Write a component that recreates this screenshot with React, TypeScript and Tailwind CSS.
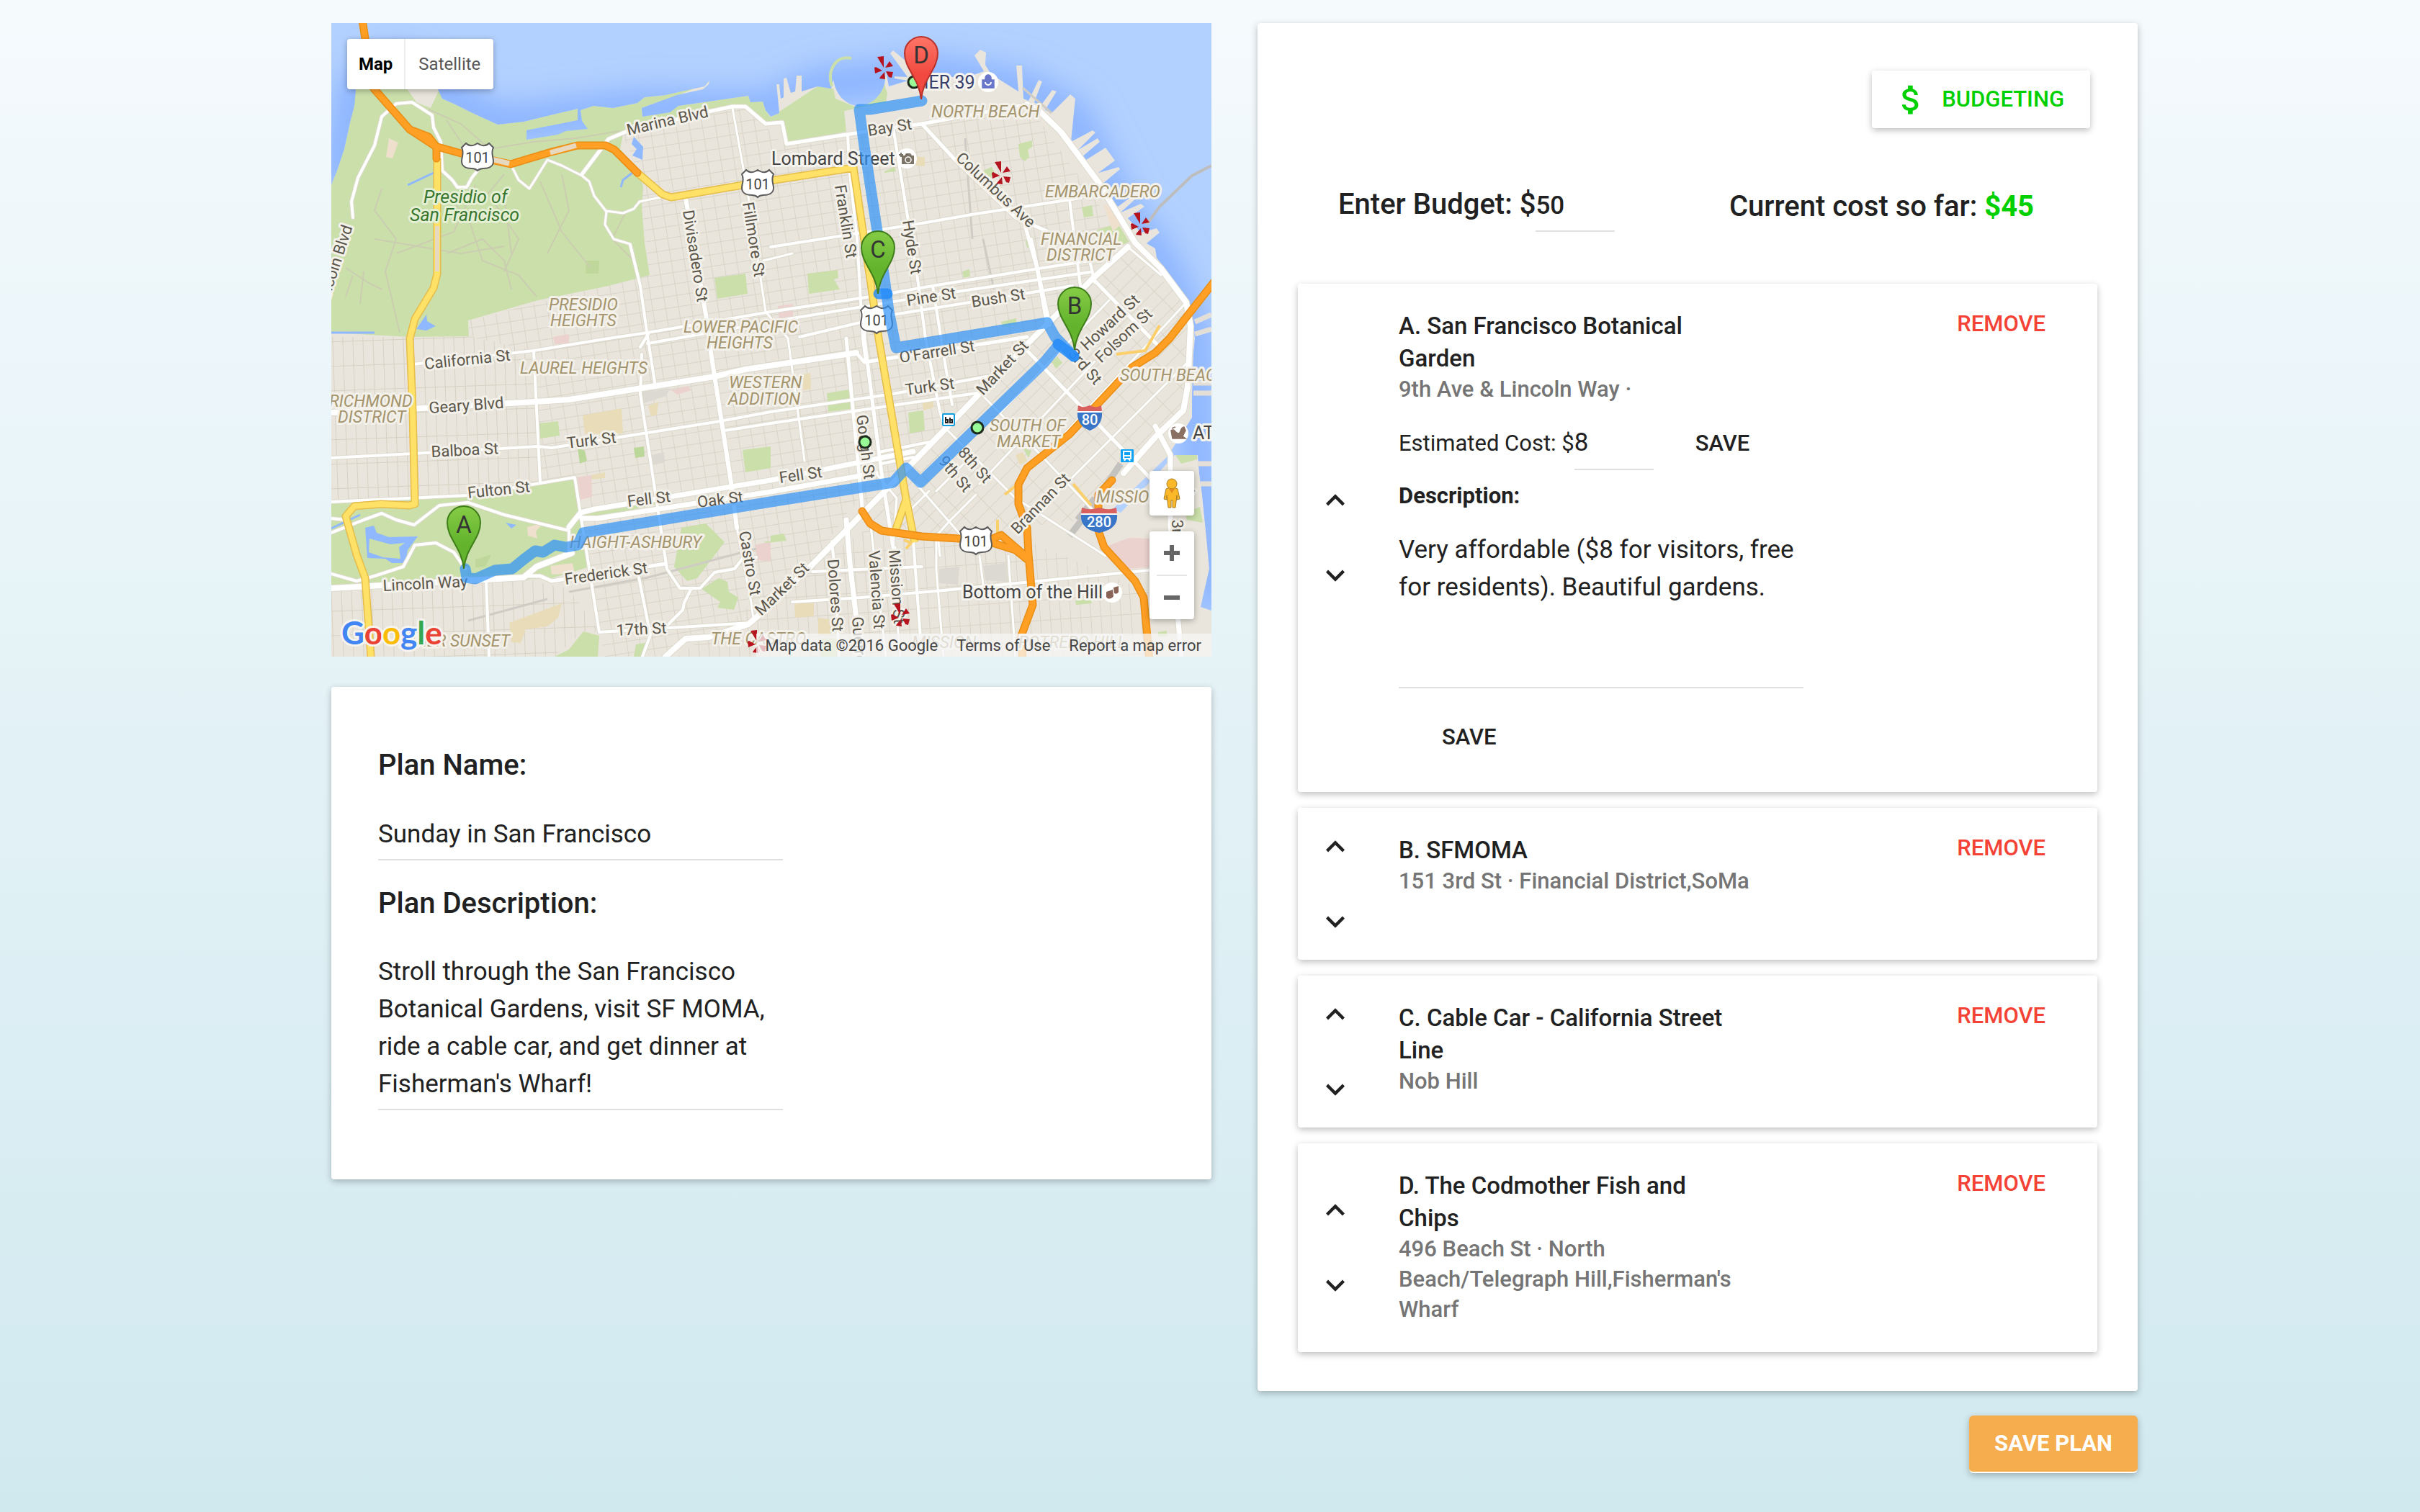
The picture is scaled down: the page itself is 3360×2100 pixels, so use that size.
import React from "react";
import { MdAttachMoney, MdExpandLess, MdExpandMore } from "react-icons/md";

/* ---------- Map drawing data ---------- */

const WATER =
  "M0 0H1222V816L1207 811L1219 758L1215 715L1209 655L1205 625L1203 600L1171 600L1136 638L1096 680L1085 675L1162 601L1168 591L1195 548V521L1197 458L1199 438L1195 405L1187 385L1177 368L1158 341L1146 326L1144 313L1132 306L1150 291L1146 285L1124 291L1106 271L1129 255L1124 251L1096 263L1118 243L1114 239L1092 255L1069 225L1095 203L1093 200L1065 208L1088 191L1075 173L1043 193L1041 187L1067 165L1064 160L1037 176L1061 152L1057 149L1027 165L1033 105L1026 99L1001 124L991 121L1007 95L1001 93L984 116L976 110L987 81L982 79L968 108L961 105L959 59H951L954 95L916 71L908 58L909 41L901 37L893 45L906 67L883 75L863 75L833 70L808 61L780 38L776 42L800 75L782 74V77L800 80L774 88L770 66L768 85C760 110 740 116 729 115C712 112 700 98 697 78L694 91L675 88L653 95V73H646L644 95L638 97L632 76L628 77V103L624 105L622 85H618L622 125L610 130L603 121L599 109L582 110L579 101L482 115L470 124L432 130L431 118L480 100L516 92L524 85L525 80L518 88L490 94L464 100L435 103L425 111L391 118L364 115L346 121L348 136L356 147L326 150L314 155L271 162V149L342 135V119L267 137L231 141L196 125L172 113L154 105L148 92L80 70L40 62L34 92L32 115L26 138L18 175L8 205L0 225Z";

const PARKS = [
  "M0 225L8 205L18 175L26 138L34 92L40 62L90 70L118 110L138 118L150 92L154 105L172 113L196 125L231 141L267 137L342 119L346 121L364 115L391 118L425 111L435 103L464 100L524 82L480 101L431 118L432 132L405 155L401 175L427 205L433 228L431 255L435 305L442 350L385 365L287 385L190 413L191 435L109 436L0 430Z",
  "M432 130L482 115L579 101L582 110L599 109L603 121L610 131L675 88L697 91L700 105L729 117L768 85L772 98L770 110L712 122L715 151L634 165L626 138L603 140L575 114L524 122L410 150Z",
  "M0 666L188 656L338 631L348 676L366 676L449 658L452 668L366 688L350 690L356 756L306 771L211 775L0 784Z",
  "M486 701L520 695L546 721L508 771L494 775L476 755Z",
  "M538 771L550 776L552 790L565 798L559 815L536 812L540 804L514 786Z",
  "M350 845L372 851L370 880H310L330 870Z",
  "M423 863L440 860L432 880H420Z",
  "M532 354L575 348L578 376L536 383Z",
  "M661 348L703 343L704 354L698 356L706 370L663 376Z",
  "M571 593L610 588V618L575 624Z",
  "M688 514L725 508L728 535L690 540Z",
  "M801 541L822 538L824 566L803 570Z",
  "M289 556L315 553L317 573L290 577Z",
  "M954 168L973 163V172L967 176L969 186L963 192L956 186Z",
  "M905 205L917 200L922 210L912 216Z",
  "M1042 256L1056 253L1058 268L1045 270Z",
  "M1062 288L1092 278L1108 304L1098 308Z",
  "M964 302L972 300L974 312L966 312Z",
  "M876 345L886 342L887 352L878 354Z",
  "M930 415L951 410V418L932 421Z",
  "M768 206L782 200L784 206L768 208Z",
  "M1163 352L1177 368L1175 372Z",
  "M600 720H610V712L628 709L632 719L604 722Z",
  "M1172 600H1202V606L1180 612Z",
  "M1185 680L1206 672L1210 694L1188 690Z",
  "M1033 802L1054 800L1056 806L1034 808Z",
  "M1148 846L1160 844V852H1148Z",
  "M680 855H702V880H680Z",
  "M960 590L972 594L968 604Z",
  "M1000 470L1008 463L1015 472L1006 480Z",
];

const TAN = [
  "M349 545L403 535L405 570L352 571Z",
  "M440 532L454 526L452 544L444 546Z",
  "M571 210L592 208L596 238L574 240Z",
  "M721 186H733L732 199H722Z",
  "M813 186L824 186V199L812 198Z",
  "M247 833L320 806L315 826L300 838L270 842L263 861L250 860Z",
  "M643 804L670 800V824L644 826Z",
  "M676 826L698 829L694 852L676 850Z",
  "M655 488L665 486L666 508L655 510Z",
  "M820 526L836 524V534L822 538Z",
  "M360 628L380 624V632L362 634Z",
  "M950 600L960 596L966 608L956 614Z",
];

const PINK = [
  "M341 631L361 628L362 658L346 662Z",
  "M620 393L641 390V412L622 416Z",
  "M1073 728L1108 715L1136 716V756L1104 758L1085 742Z",
  "M472 510L495 504L500 510L480 516Z",
  "M588 725L610 720V748L592 746Z",
  "M308 436L330 432V445L310 446Z",
];

const SAND = [
  "M80 160L93 166L85 188L76 186Z",
  "M272 700L295 694L284 706L286 716L273 712Z",
  "M304 754L335 750L338 764L306 766Z",
  "M1072 250L1085 290L1096 280L1086 262Z",
];

const GREY = ["M844 758L872 755L870 780L844 778Z", "M905 754L936 750L938 776L908 774Z", "M432 512L470 507L465 518L434 528Z", "M445 600L462 596L463 610L446 614Z"];

const LAKES = [
  "M47 701L59 698L63 708L80 714L120 713L106 732L103 750L84 750L75 744L50 743ZM53 716L52 735L72 742L96 744L94 728L102 722L82 724Z",
  "M242 694L257 697L250 702Z",
  "M420 158L433 172L432 190L418 184L424 175L417 168Z",
  "M132 405L133 414L145 421L132 427L118 425Z",
];

const GRIDS: { d: string; fill: string }[] = [
  { d: "M0 436H109L191 435L281 455L290 640L188 656L0 666Z", fill: "url(#gridWest)" },
  { d: "M0 790L267 772L330 786L372 846L350 845L310 880H0Z", fill: "url(#gridWest)" },
  { d: "M191 413L442 350L431 255L433 228L405 155L575 116L630 170L968 114L1100 300L974 440L800 620L737 672L600 650L348 688L338 631L290 640L281 455L191 436Z", fill: "url(#gridNorth)" },
  { d: "M350 690L610 655L730 660L669 751L579 835L524 853L492 855L464 880H380L372 846Z", fill: "url(#gridNorth)" },
  { d: "M1106 315L1187 388L1193 421L1185 538L1144 575L1050 690L960 700L860 716L748 690L800 620L974 440Z", fill: "url(#gridSoma)" },
  { d: "M669 751L748 700L860 722L968 720L1136 790V880H480Z", fill: "url(#gridMission)" },
];

const ROADS: { w: number; d: string }[] = [
  { w: 4, d: "M113 474L281 455L385 438L439 430L610 401L748 380L835 365L982 341L1053 330" },
  { w: 4, d: "M439 445L610 415L835 378L1053 346M650 436L780 405L1029 365" },
  { w: 8, d: "M0 541L109 536L283 526L330 523L425 508L532 491L575 481L729 458" },
  { w: 5, d: "M729 458L740 471L966 436M715 438L737 671M740 400V438L764 625L780 728" },
  { w: 4, d: "M0 604L113 598L287 588L306 590L433 570L540 553L610 540L780 515L910 491" },
  { w: 4, d: "M546 566L610 556L780 531L903 513M760 596L830 582M764 612L808 603" },
  { w: 4, d: "M0 665L188 656L338 631L372 846L583 833" },
  { w: 7, d: "M330 700L346 680L366 675L610 635L808 595M348 688L370 688L610 651L756 625" },
  { w: 8, d: "M0 785L267 770L285 755L334 736" },
  { w: 5, d: "M267 768L290 768L306 775L464 751" },
  { w: 4, d: "M281 455L290 638M215 775L219 880" },
  { w: 6, d: "M492 243L520 405L526 451L555 638L563 701" },
  { w: 3, d: "M563 701L583 805L586 828M557 118L579 241L603 401L634 438L657 608M600 330L640 320" },
  { w: 4, d: "M415 308L429 365L439 435L450 505M429 450L440 432M431 460L429 515L466 758L484 785H512L532 763L560 758L570 745L590 742M500 785L490 805L488 815L465 838M425 760L443 850L432 880" },
  { w: 5, d: "M348 210L385 161L409 151L524 123L557 116H575L603 140L626 138L632 168L740 151L820 140L966 113" },
  { w: 4, d: "M30 270L28 248L37 215L60 170L70 130L90 112L112 110L140 128L142 145L152 165L154 205L168 218L175 228L188 228L195 215L203 205" },
  { w: 3, d: "M249 196L260 218L275 230L300 190L320 198L348 212L358 220L365 240L382 262L380 280L392 300L415 307M382 261L405 264L420 258L428 248L462 241" },
  { w: 4, d: "M717 155L719 200L730 300L738 438L742 470" },
  { w: 4, d: "M780 145L814 355L825 438L845 540L852 560M835 365L850 460L862 530M910 491L920 505" },
  { w: 5, d: "M820 140L866 190L950 270L998 291M960 270L980 341L994 420" },
  { w: 4, d: "M610 311L820 278L895 265L1041 243M1025 246L1040 365M972 300L998 420M1053 330L1060 360" },
  { w: 8, d: "M966 113L982 121L1013 151L1065 221L1116 305L1152 341L1187 388L1193 421L1189 505L1183 538L1144 575L1100 625" },
  { w: 8, d: "M1106 311L1057 355L974 438L800 618L669 751L610 808L579 835L524 853L492 855L464 880" },
  { w: 5, d: "M966 455L1136 631L1168 640M1057 355L1150 450" },
  { w: 3, d: "M905 518L985 600L1070 690M850 560L950 660L1075 740M1106 311L1152 350M812 640L895 735" },
  { w: 3, d: "M1060 470L900 640M1187 388L1000 590M1190 470L1130 530L960 700M1080 385L930 540M840 650L890 600M756 625L785 660L780 728M800 680L830 650M845 740L842 710L860 690L895 655" },
  { w: 7, d: "M1144 560L1165 600V700L1180 880M715 690L720 750L735 880" },
  { w: 4, d: "M640 804L735 798L850 788L1136 760M668 762L820 755M808 720L820 880M695 720L700 770L705 880" },
  { w: 3, d: "M840 716V760L850 880M900 740L905 780M940 740L950 880M748 690L770 880M783 728V800L790 880" },
  { w: 4, d: "M0 688L20 690M0 708L45 690L70 681L90 690L115 697L150 670L190 666L240 683L330 705L330 740M0 765L35 775L60 768L100 755L116 725L145 722L170 735L186 758" },
];

const MINOR =
  "M70 230L60 260L90 300L75 345L95 430M150 230L190 270L210 330L260 350L285 380M220 240L260 300L240 345M290 220L320 290L360 340M200 225L170 290L90 320M60 300L180 320L240 310M160 320L210 300L240 330L250 370M160 135L190 180M410 260L390 300L420 330M240 210L215 240M320 210L330 260L300 320M240 240L250 320M135 120L180 140L220 175L280 165L340 160L400 150M20 340L50 360L70 370M30 350L20 380M45 345L40 390";

type Label = { t: string; x: number; y: number; r?: number };

const STREETS: Label[] = [
  { t: "Marina Blvd", x: 412, y: 156, r: -13 },
  { t: "Divisadero St", x: 488, y: 261, r: 81 },
  { t: "Fillmore St", x: 571, y: 250, r: 81 },
  { t: "Lincoln Blvd", x: -7, y: 396, r: -72 },
  { t: "Franklin St", x: 699, y: 226, r: 81 },
  { t: "Hyde St", x: 793, y: 275, r: 81 },
  { t: "Columbus Ave", x: 866, y: 189, r: 43 },
  { t: "Bay St", x: 746, y: 157, r: -9 },
  { t: "Pine St", x: 800, y: 393, r: -9 },
  { t: "Bush St", x: 890, y: 395, r: -9 },
  { t: "Howard St", x: 1049, y: 456, r: -43 },
  { t: "Folsom St", x: 1069, y: 473, r: -43 },
  { t: "3rd St", x: 1022, y: 460, r: 49 },
  { t: "Market St", x: 905, y: 518, r: -47 },
  { t: "Market St", x: 597, y: 824, r: -44 },
  { t: "O'Farrell St", x: 790, y: 472, r: -9 },
  { t: "Turk St", x: 798, y: 517, r: -8 },
  { t: "Gough St", x: 729, y: 545, r: 83 },
  { t: "8th St", x: 869, y: 597, r: 49 },
  { t: "9th St", x: 842, y: 609, r: 50 },
  { t: "Fell St", x: 623, y: 639, r: -8 },
  { t: "Brannan St", x: 953, y: 711, r: -46 },
  { t: "Dolores St", x: 689, y: 745, r: 86 },
  { t: "Valencia St", x: 746, y: 733, r: 86 },
  { t: "Mission St", x: 774, y: 732, r: 86 },
  { t: "Guerrero St", x: 723, y: 825, r: 86 },
  { t: "3rd St", x: 1167, y: 690, r: 88 },
  { t: "California St", x: 130, y: 481, r: -6 },
  { t: "Geary Blvd", x: 136, y: 542, r: -4 },
  { t: "Balboa St", x: 139, y: 603, r: -3 },
  { t: "Turk St", x: 328, y: 591, r: -7 },
  { t: "Fulton St", x: 190, y: 660, r: -6 },
  { t: "Fell St", x: 412, y: 672, r: -7 },
  { t: "Oak St", x: 509, y: 673, r: -7 },
  { t: "Lincoln Way", x: 72, y: 789, r: -3 },
  { t: "Frederick St", x: 325, y: 780, r: -8 },
  { t: "17th St", x: 396, y: 851, r: -3 },
  { t: "Castro St", x: 566, y: 707, r: 80 },
];

const AREAS: Label[] = [
  { t: "PRESIDIO", x: 302, y: 399 },
  { t: "HEIGHTS", x: 304, y: 421 },
  { t: "LOWER PACIFIC", x: 489, y: 430 },
  { t: "HEIGHTS", x: 521, y: 452 },
  { t: "LAUREL HEIGHTS", x: 262, y: 487 },
  { t: "RICHMOND", x: -3, y: 533 },
  { t: "DISTRICT", x: 9, y: 555 },
  { t: "WESTERN", x: 552, y: 507 },
  { t: "ADDITION", x: 551, y: 530 },
  { t: "HAIGHT-ASHBURY", x: 331, y: 729 },
  { t: "INNER SUNSET", x: 95, y: 866 },
  { t: "THE CASTRO", x: 527, y: 863 },
  { t: "NORTH BEACH", x: 833, y: 131 },
  { t: "EMBARCADERO", x: 991, y: 242 },
  { t: "FINANCIAL", x: 985, y: 308 },
  { t: "DISTRICT", x: 993, y: 330 },
  { t: "SOUTH BEACH", x: 1095, y: 497 },
  { t: "SOUTH OF", x: 914, y: 567 },
  { t: "MARKET", x: 924, y: 589 },
  { t: "MISSION BAY", x: 1062, y: 666 },
  { t: "MISSION", x: 806, y: 868 },
  { t: "POTRERO HILL", x: 954, y: 868 },
];

const PINS = [
  { l: "A", x: 184, y: 758 },
  { l: "C", x: 759, y: 376 },
  { l: "B", x: 1032, y: 454 },
  { l: "D", x: 819, y: 106 },
];

const ROUTE =
  "M820 108L748 120H733L740 171L768 355L774 400L784 451L994 416L1005 436L1031 463M1009 448L990 471L818 638L798 618L780 638L610 665L350 708L342 725L326 728L310 725L294 735L283 733L267 745L251 758L227 760L200 772L188 770L186 758";

function Shield101({ x, y }: { x: number; y: number }) {
  return (
    <g transform={`translate(${x} ${y})`}>
      <path
        d="M-16 -19C-12 -15 -6 -15 0 -19C6 -15 12 -15 16 -19L22 -13C18 -6 22 0 22 6C22 14 14 16 8 16C4 16 2 17 0 19C-2 17 -4 16 -8 16C-14 16 -22 14 -22 6C-22 0 -18 -6 -22 -13Z"
        fill="#fff"
        stroke="#5c5c5c"
        strokeWidth="2"
      />
      <text y="8" textAnchor="middle" fontSize="20" fill="#444">101</text>
    </g>
  );
}

function Interstate({ x, y, w, n }: { x: number; y: number; w: number; n: string }) {
  return (
    <g transform={`translate(${x} ${y})`}>
      <path d={`M${-w} -8H${w}C${w + 1} 6 ${w - 6} 14 0 18C${6 - w} 14 ${-w - 1} 6 ${-w} -8Z`} fill="#3a76c8" />
      <path d={`M${-w} -8L${1 - w} -17C${-w / 2} -13 ${-w / 3} -15 0 -17C${w / 3} -15 ${w / 2} -13 ${w - 1} -17L${w} -8Z`} fill="#d9605f" />
      <path d={`M${-w} -8H${w}`} stroke="#fff" strokeWidth="2" />
      <text y="10" textAnchor="middle" fontSize="20" fontWeight="500" fill="#fff">{n}</text>
    </g>
  );
}

function Burst({ x, y }: { x: number; y: number }) {
  return (
    <g transform={`translate(${x} ${y})`} fill="#b5141f">
      <path d="M-9 -17L0 -18V-2Z" />
      <path d="M2 -2L8 -11L13 -4Z" />
      <path d="M3 3L13 4L11 12L7 11Z" />
      <path d="M1 4L2 14L-6 13L-5 11Z" />
      <path d="M-2 2L-12 6L-13 -2L-11 -3Z" />
    </g>
  );
}

function Pin({ l, x, y }: { l: string; x: number; y: number }) {
  const end = l === "D";
  return (
    <g transform={`translate(${x} ${y})`}>
      <path
        d="M0 0C-3 -30 -23 -42 -23 -64A23 23 0 0 1 23 -64C23 -42 3 -30 0 0Z"
        fill={end ? "url(#pinEnd)" : "url(#pinStop)"}
        stroke={end ? "#b8322c" : "#3f7d1a"}
        strokeWidth="2"
      />
      <text y="-50" textAnchor="middle" fontSize="33" fill="#333">{l}</text>
    </g>
  );
}

function MapDrawing() {
  return (
    <svg viewBox="0 0 1222 880" preserveAspectRatio="xMidYMid slice" className="block h-full w-full font-['Roboto',sans-serif]" role="img" aria-label="Route map of San Francisco">
      <defs>
        <pattern id="gridWest" width="14" height="34" patternUnits="userSpaceOnUse" patternTransform="rotate(-2)">
          <path d="M0 0V34M0 0H14" stroke="#d6d1c2" strokeWidth="2" fill="none" />
        </pattern>
        <pattern id="gridNorth" width="18" height="16" patternUnits="userSpaceOnUse" patternTransform="rotate(-9)">
          <path d="M0 0V16M0 0H18" stroke="#d9d4c7" strokeWidth="2" fill="none" />
        </pattern>
        <pattern id="gridSoma" width="34" height="17" patternUnits="userSpaceOnUse" patternTransform="rotate(-45)">
          <path d="M0 0V17M0 0H34" stroke="#d9d4c7" strokeWidth="2" fill="none" />
        </pattern>
        <pattern id="gridMission" width="14" height="28" patternUnits="userSpaceOnUse" patternTransform="rotate(-4)">
          <path d="M0 0V28M0 0H14" stroke="#d9d4c7" strokeWidth="2" fill="none" />
        </pattern>
        <linearGradient id="pinStop" x1="0" y1="0" x2="0" y2="1">
          <stop offset="0" stopColor="#86cc46" />
          <stop offset="0.6" stopColor="#63b32d" />
        </linearGradient>
        <linearGradient id="pinEnd" x1="0" y1="0" x2="0" y2="1">
          <stop offset="0" stopColor="#fd7567" />
          <stop offset="0.6" stopColor="#f1493f" />
        </linearGradient>
        <clipPath id="waterClip">
          <path d={WATER} />
        </clipPath>
        <filter id="shore" x="-10%" y="-10%" width="120%" height="120%">
          <feGaussianBlur stdDeviation="22" />
        </filter>
      </defs>

      <rect width="1222" height="880" fill="#e9e5dc" />
      {GRIDS.map((g, i) => <path key={i} d={g.d} fill={g.fill} />)}
      {TAN.map((d, i) => <path key={i} d={d} fill="#e8dcb9" />)}
      {PINK.map((d, i) => <path key={i} d={d} fill="#ebd2cf" />)}
      {GREY.map((d, i) => <path key={i} d={d} fill="#dcd8d2" />)}
      {PARKS.map((d, i) => <path key={i} d={d} fill="#cadfaa" />)}
      {SAND.map((d, i) => <path key={i} d={d} fill="#eee0cc" />)}
      <path d="M354 330H372L371 348H353ZM200 745L222 738L214 755L200 756Z" fill="#bfd79a" />
      <path d="M342 590L352 594L355 608L345 612ZM420 590L434 588L435 602L422 604Z" fill="#bcd79a" />
      <path d={MINOR} fill="none" stroke="#cbcdb0" strokeWidth="2" />
      <path d={WATER} fill="#b3d1ff" />
      <g clipPath="url(#waterClip)">
        <path d="M0 225L18 175L34 92L90 60L231 141L430 118L603 121L675 88L833 70L960 90L1030 130L1092 255L1150 330L1199 438V560L1215 715L1222 816" fill="none" stroke="#84aeff" strokeWidth="44" filter="url(#shore)" />
      </g>
      {LAKES.map((d, i) => <path key={i} d={d} fill="#90b8ff" fillRule="evenodd" />)}
      <path d="M106 225L142 208M402 228L405 218L418 208M0 430H60M0 702L40 683" stroke="#90b8ff" strokeWidth="3" fill="none" />
      <path d="M1197 500H1222M1197 514H1222M1203 612H1222M1207 640H1222M1199 415L1222 405M1199 432L1222 425" stroke="#e3dfd6" strokeWidth="7" />
      <path d="M695 88C688 66 700 44 722 49" stroke="#cadfaa" strokeWidth="4" fill="none" />
      <path d="M1132 280L1150 255L1195 212L1222 198" stroke="#bdbdbd" strokeWidth="4" fill="none" />
      <path d="M1096 612L1050 680L1025 712M1060 660L1036 690" stroke="#c4c2bf" strokeWidth="9" fill="none" />
      <path d="M330 790L440 770L590 730M190 830L300 800" stroke="#cfccc5" strokeWidth="3" fill="none" />
      <path d="M880 160L890 300M905 300L920 370M960 90L1000 125" stroke="#cfccc5" strokeWidth="3" fill="none" />

      <g fill="none" strokeLinejoin="round" strokeLinecap="round">
        {ROADS.map((r, i) => <path key={i} d={r.d} stroke="#dedace" strokeWidth={r.w + 2} />)}
        {ROADS.map((r, i) => <path key={i} d={r.d} stroke="#fff" strokeWidth={r.w} />)}

        {/* Yellow arterials */}
        <g strokeLinecap="butt">
          <path d="M425 208L460 238L472 242L571 225L725 201L748 355L760 438L798 661L810 721M798 661L783 706M147 188V348L142 368L116 411L109 438L113 538L116 668L108 670L69 668L32 671L20 685L35 738L47 771L55 880" stroke="#e6bd4a" strokeWidth="11" />
          <path d="M425 208L460 238L472 242L571 225L725 201L748 355L760 438L798 661L810 721M798 661L783 706M147 188V348L142 368L116 411L109 438L113 538L116 668L108 670L69 668L32 671L20 685L35 738L47 771L55 880" stroke="#ffe168" strokeWidth="8" />
          <path d="M147 282V345" stroke="#e6d9c0" strokeWidth="6" />
          <path d="M1030 640L1055 670M925 690V715M935 655L960 635M795 718L805 722L798 730M1090 460L1130 455L1150 420M968 740L972 800" stroke="#fbcf6b" strokeWidth="4" />
        </g>

        {/* Orange freeways */}
        <path d="M43 -4L47 21L59 91L109 148L144 171L180 181L249 196L302 180L342 170H381L393 176L425 208M1226 359L1164 438L1144 458L1112 478L1053 541L1025 571L966 618L954 641V668L966 701L968 738L974 808L958 851L960 886M737 678L748 695L764 705L820 713L871 716L918 722L950 732L966 745M900 724L918 716L930 711L966 742M1084 635L1065 655V705L1073 728L1116 775L1128 798L1136 886M109 148L135 158L146 172V188" stroke="#ea8e14" strokeWidth="11" />
        <path d="M43 -4L47 21L59 91L109 148L144 171L180 181L249 196L302 180L342 170H381L393 176L425 208M1226 359L1164 438L1144 458L1112 478L1053 541L1025 571L966 618L954 641V668L966 701L968 738L974 808L958 851L960 886M737 678L748 695L764 705L820 713L871 716L918 722L950 732L966 745M900 724L918 716L930 711L966 742M1084 635L1065 655V705L1073 728L1116 775L1128 798L1136 886M109 148L135 158L146 172V188" stroke="#ff9f23" strokeWidth="8" />
        <path d="M222 189L247 195M304 180L340 170" stroke="#e6d9c0" strokeWidth="7" strokeLinecap="butt" />
      </g>

      <g fontSize="22" fill="#5b564b" stroke="#f3f1ea" strokeWidth="6" strokeLinejoin="round" paintOrder="stroke">
        {STREETS.map((s, i) => <text key={i} transform={`translate(${s.x} ${s.y}) rotate(${s.r ?? 0})`}>{s.t}</text>)}
      </g>
      <g fontSize="23" fontStyle="italic" fill="#a4946d" stroke="#f3f1ea" strokeWidth="6" strokeLinejoin="round" paintOrder="stroke">
        {AREAS.map((s, i) => <text key={i} x={s.x} y={s.y}>{s.t}</text>)}
      </g>
      <g fontSize="25" fontStyle="italic" fill="#38762f" stroke="#e4efd4" strokeWidth="6" strokeLinejoin="round" paintOrder="stroke">
        <text x="128" y="250">Presidio of</text>
        <text x="109" y="275">San Francisco</text>
      </g>
      <g fontSize="25" fill="#444" stroke="#f6f4ef" strokeWidth="6" strokeLinejoin="round" paintOrder="stroke">
        <text x="611" y="197">Lombard Street</text>
        <text x="876" y="799">Bottom of the Hill</text>
        <text x="1196" y="578">AT&amp;T Park</text>
        <text x="807" y="91" fill="#393f6b">PIER 39</text>
      </g>

      {/* Places of interest */}
      <g fill="#fff">
        <circle cx="912" cy="82" r="14" />
        <circle cx="799" cy="188" r="14" />
        <circle cx="1176" cy="570" r="14" />
        <circle cx="1084" cy="791" r="14" />
      </g>
      <path d="M904 79H920V90H904ZM908 79V76A4 4 0 0 1 916 76V79" fill="#6a76c9" stroke="#6a76c9" strokeWidth="1.5" />
      <path d="M908 82A4 4 0 0 0 916 82" fill="none" stroke="#fff" strokeWidth="2" />
      <path d="M792 184H796L798 181H804L806 184H809V196H792Z" fill="#7c7466" />
      <circle cx="801" cy="190" r="4" fill="#7c7466" stroke="#fff" strokeWidth="1.5" />
      <path d="M788 183H794M791 180V186" stroke="#7c7466" strokeWidth="2" />
      <path d="M1166 566C1170 562 1172 570 1176 570C1180 570 1178 562 1184 561L1186 566L1182 574L1186 577H1168ZM1167 563L1172 561" fill="#8a6f63" stroke="#8a6f63" strokeWidth="1.5" />
      <path d="M1076 790L1085 787L1086 796C1084 800 1078 801 1076 797ZM1086 784L1093 782V790C1092 793 1089 793 1087 792Z" fill="#8a6357" />
      <g transform="translate(857 551)">
        <rect x="-8" y="-8" width="16" height="16" rx="1" fill="#fff" stroke="#139ede" strokeWidth="2" />
        <path d="M-4 -4V4H-1V0H-4M2 -3V4H5V0H2" fill="none" stroke="#222" strokeWidth="2" />
      </g>
      <g transform="translate(1105 601)">
        <rect x="-9" y="-9" width="18" height="18" rx="1" fill="#10a3f5" />
        <path d="M-5 -6H5V4H-5ZM-4 7L-2 4M4 7L2 4" fill="none" stroke="#fff" strokeWidth="2" />
        <path d="M-5 0H5" stroke="#fff" strokeWidth="2" />
      </g>

      <Shield101 x={203} y={186} />
      <Shield101 x={592} y={223} />
      <Shield101 x={757} y={412} />
      <Shield101 x={895} y={719} />
      <Interstate x={1053} y={548} w={17} n="80" />
      <Interstate x={1066} y={690} w={25} n="280" />

      <path d={ROUTE} fill="none" stroke="#2e91f8" strokeOpacity="0.7" strokeWidth="15" strokeLinejoin="round" strokeLinecap="round" />
      <path d="M760 376H772M1009 446L1031 463" fill="none" stroke="#2189f8" strokeOpacity="0.8" strokeWidth="15" strokeLinecap="round" />

      <g fill="#98fb98" stroke="#1d2b1d" strokeWidth="3">
        <circle cx="809" cy="82" r="8" />
        <circle cx="897" cy="562" r="8" />
        <circle cx="741" cy="582" r="8" />
      </g>
      <Burst x={767} y={64} />
      <Burst x={930} y={210} />
      <Burst x={1123} y={281} />
      <Burst x={790} y={824} />
      <Burst x={591} y={861} />
      {PINS.map((p) => <Pin key={p.l} {...p} />)}

      <text x="14" y="863" fontSize="44" fontWeight="700" stroke="#f6f4ef" strokeWidth="6" strokeLinejoin="round" paintOrder="stroke" className="font-['Lato',sans-serif]">
        <tspan fill="#4285f4">G</tspan><tspan fill="#ea4335">o</tspan><tspan fill="#fbbc05">o</tspan><tspan fill="#4285f4">g</tspan><tspan fill="#34a853">l</tspan><tspan fill="#ea4335">e</tspan>
      </text>
    </svg>
  );
}

/* ---------- Page pieces ---------- */

const CARD = "rounded-[4px] bg-white shadow-[0_3px_10px_rgba(0,0,0,0.26)]";
const FIELD = "block border-b-2 border-[#e0e0e0] bg-transparent p-0 text-[35px] outline-none";
const AREA = `${FIELD} h-[218px] w-[562px] resize-none overflow-hidden leading-[52px]`;
const FLAT_BUTTON = "h-[76px] px-8 text-[31px] font-medium";

function MapPanel() {
  return (
    <section className="relative h-[880px] overflow-hidden">
      <MapDrawing />

      <div className="absolute top-[22px] left-[22px] flex h-[70px] rounded-[4px] bg-white shadow-[0_2px_8px_rgba(0,0,0,0.3)]">
        <button className="border-r-2 border-[#eee] px-4 text-[24px] font-bold text-black">Map</button>
        <button className="px-[18px] text-[24px] text-[#565656]">Satellite</button>
      </div>

      <div className="absolute right-6 bottom-[52px] flex w-[62px] flex-col gap-[22px]">
        <button aria-label="Street View" className="flex h-[62px] items-center justify-center rounded-[4px] bg-white shadow-[0_2px_8px_rgba(0,0,0,0.3)]">
          <svg viewBox="0 0 24 42" className="h-[42px] w-6">
            <path d="M4 15Q12 11 20 15L23 29L19 30V24L17 41H13V31H11V41H7L5 24V30L1 29Z" fill="#fbb929" stroke="#a87b22" strokeWidth="1" />
            <circle cx="12" cy="8" r="7" fill="#fbb929" stroke="#a87b22" strokeWidth="1" />
            <path d="M8 15H16L12 21Z" fill="#e58a1f" />
          </svg>
        </button>
        <div className="flex h-[122px] flex-col items-center rounded-[4px] bg-white shadow-[0_2px_8px_rgba(0,0,0,0.3)]">
          <button aria-label="Zoom in" className="flex w-full flex-1 items-center justify-center">
            <svg viewBox="0 0 24 24" className="size-6">
              <path d="M9 1H15V9H23V15H15V23H9V15H1V9H9Z" fill="#666" />
            </svg>
          </button>
          <span className="h-[2px] w-[42px] bg-[#e6e6e6]" />
          <button aria-label="Zoom out" className="flex w-full flex-1 items-center justify-center">
            <svg viewBox="0 0 24 24" className="size-6">
              <path d="M1 9H23V15H1Z" fill="#666" />
            </svg>
          </button>
        </div>
      </div>

      <div className="absolute right-0 bottom-0 flex h-8 items-center gap-[26px] bg-[#f5f5f5]/75 pr-[14px] pl-3 text-[22px] text-[#444]">
        <span>Map data ©2016 Google</span>
        <a href="#terms">Terms of Use</a>
        <a href="#report">Report a map error</a>
      </div>
    </section>
  );
}

function PlanForm() {
  return (
    <section className={`${CARD} px-[65px] pt-[79px] pb-24`}>
      <label htmlFor="plan-name" className="block text-[40px] leading-[60px] font-medium">Plan Name:</label>
      <input id="plan-name" defaultValue="Sunday in San Francisco" className={`${FIELD} mt-[31px] h-[71px] w-[562px]`} />
      <label htmlFor="plan-description" className="mt-[30px] block text-[40px] leading-[60px] font-medium">Plan Description:</label>
      <textarea
        id="plan-description"
        defaultValue="Stroll through the San Francisco Botanical Gardens, visit SF MOMA, ride a cable car, and get dinner at Fisherman's Wharf!"
        className={`${AREA} mt-[39px]`}
      />
    </section>
  );
}

type Stop = { id: string; name: string; place: string; cost?: string; note?: string };

const STOPS: Stop[] = [
  {
    id: "A",
    name: "San Francisco Botanical Garden",
    place: "9th Ave & Lincoln Way ·",
    cost: "8",
    note: "Very affordable ($8 for visitors, free for residents). Beautiful gardens.",
  },
  { id: "B", name: "SFMOMA", place: "151 3rd St · Financial District,SoMa" },
  { id: "C", name: "Cable Car - California Street Line", place: "Nob Hill" },
  { id: "D", name: "The Codmother Fish and Chips", place: "496 Beach St · North Beach/Telegraph Hill,Fisherman's Wharf" },
];

function StopCard({ stop }: { stop: Stop }) {
  return (
    <li className={`${CARD} flex min-h-[211px]`}>
      <div className="flex w-[140px] shrink-0 flex-col justify-center gap-[52px] pl-[26px]">
        <button aria-label={`Move ${stop.name} up`} className="size-[52px]">
          <MdExpandLess className="size-[52px]" />
        </button>
        <button aria-label={`Move ${stop.name} down`} className="size-[52px]">
          <MdExpandMore className="size-[52px]" />
        </button>
      </div>

      <div className="flex-1 pt-9 pb-[38px]">
        <h3 className="w-[484px] text-[33px] leading-[45px] font-medium">{`${stop.id}. ${stop.name}`}</h3>
        <p className="w-[500px] text-[31px] leading-[42px] font-medium text-[#757575]">{stop.place}</p>
        {stop.cost && (
          <div className="mt-[15px] flex h-[76px] items-baseline text-[31px]">
            <label htmlFor={`cost-${stop.id}`}>Estimated Cost: $</label>
            <input id={`cost-${stop.id}`} defaultValue={stop.cost} className={`${FIELD} h-[76px] w-[110px]`} />
            <button className={`${FLAT_BUTTON} ml-[26px]`}>SAVE</button>
          </div>
        )}
        {stop.note && (
          <>
            <label htmlFor={`note-${stop.id}`} className="mt-[15px] block text-[31px] leading-[42px] font-bold">Description:</label>
            <textarea id={`note-${stop.id}`} defaultValue={stop.note} className={`${AREA} mt-7`} />
            <button className={`${FLAT_BUTTON} mt-[30px] ml-7 block`}>SAVE</button>
          </>
        )}
      </div>

      <div className="pt-[18px] pr-10">
        <button className={`${FLAT_BUTTON} text-[#f44336]`}>REMOVE</button>
      </div>
    </li>
  );
}

function Itinerary() {
  return (
    <section className={`${CARD} pt-[66px] pb-[54px]`}>
      <div className="flex justify-end pr-[66px]">
        <button className="flex h-20 items-center gap-4 rounded-[4px] bg-white pr-9 pl-7 text-[31px] font-medium text-[#00d000] shadow-[0_3px_10px_rgba(0,0,0,0.26)]">
          <MdAttachMoney className="size-[53px]" />
          BUDGETING
        </button>
      </div>

      <div className="mt-[72px] grid h-[72px] grid-cols-2 text-[40px] font-medium">
        <div className="flex items-baseline pl-28">
          <label htmlFor="budget">Enter Budget: $</label>
          <input id="budget" defaultValue="50" className={`${FIELD} h-[72px] w-[110px] font-medium`} />
        </div>
        <p className="pl-11 leading-[74px]">
          Current cost so far: <strong className="font-bold text-[#00d000]">$45</strong>
        </p>
      </div>

      <ul className="mt-[72px] flex flex-col gap-[22px] px-14">
        {STOPS.map((s) => <StopCard key={s.id} stop={s} />)}
      </ul>
    </section>
  );
}

export default function App() {
  return (
    <main className="min-h-screen bg-linear-to-b from-[#f5fafd] to-[#d0e9ef] pt-8 pr-[392px] pb-[54px] pl-[460px] font-['Roboto',sans-serif] text-[#212121]">
      <div className="grid grid-cols-2 items-start gap-16">
        <div className="flex flex-col gap-[42px]">
          <MapPanel />
          <PlanForm />
        </div>
        <div className="flex flex-col">
          <Itinerary />
          <button className="mt-[34px] h-20 w-[234px] self-end rounded-[6px] border-b-2 border-white bg-[#f6ad4e] text-[31px] font-bold text-white shadow-[0_3px_10px_rgba(0,0,0,0.26)]">
            SAVE PLAN
          </button>
        </div>
      </div>
    </main>
  );
}
